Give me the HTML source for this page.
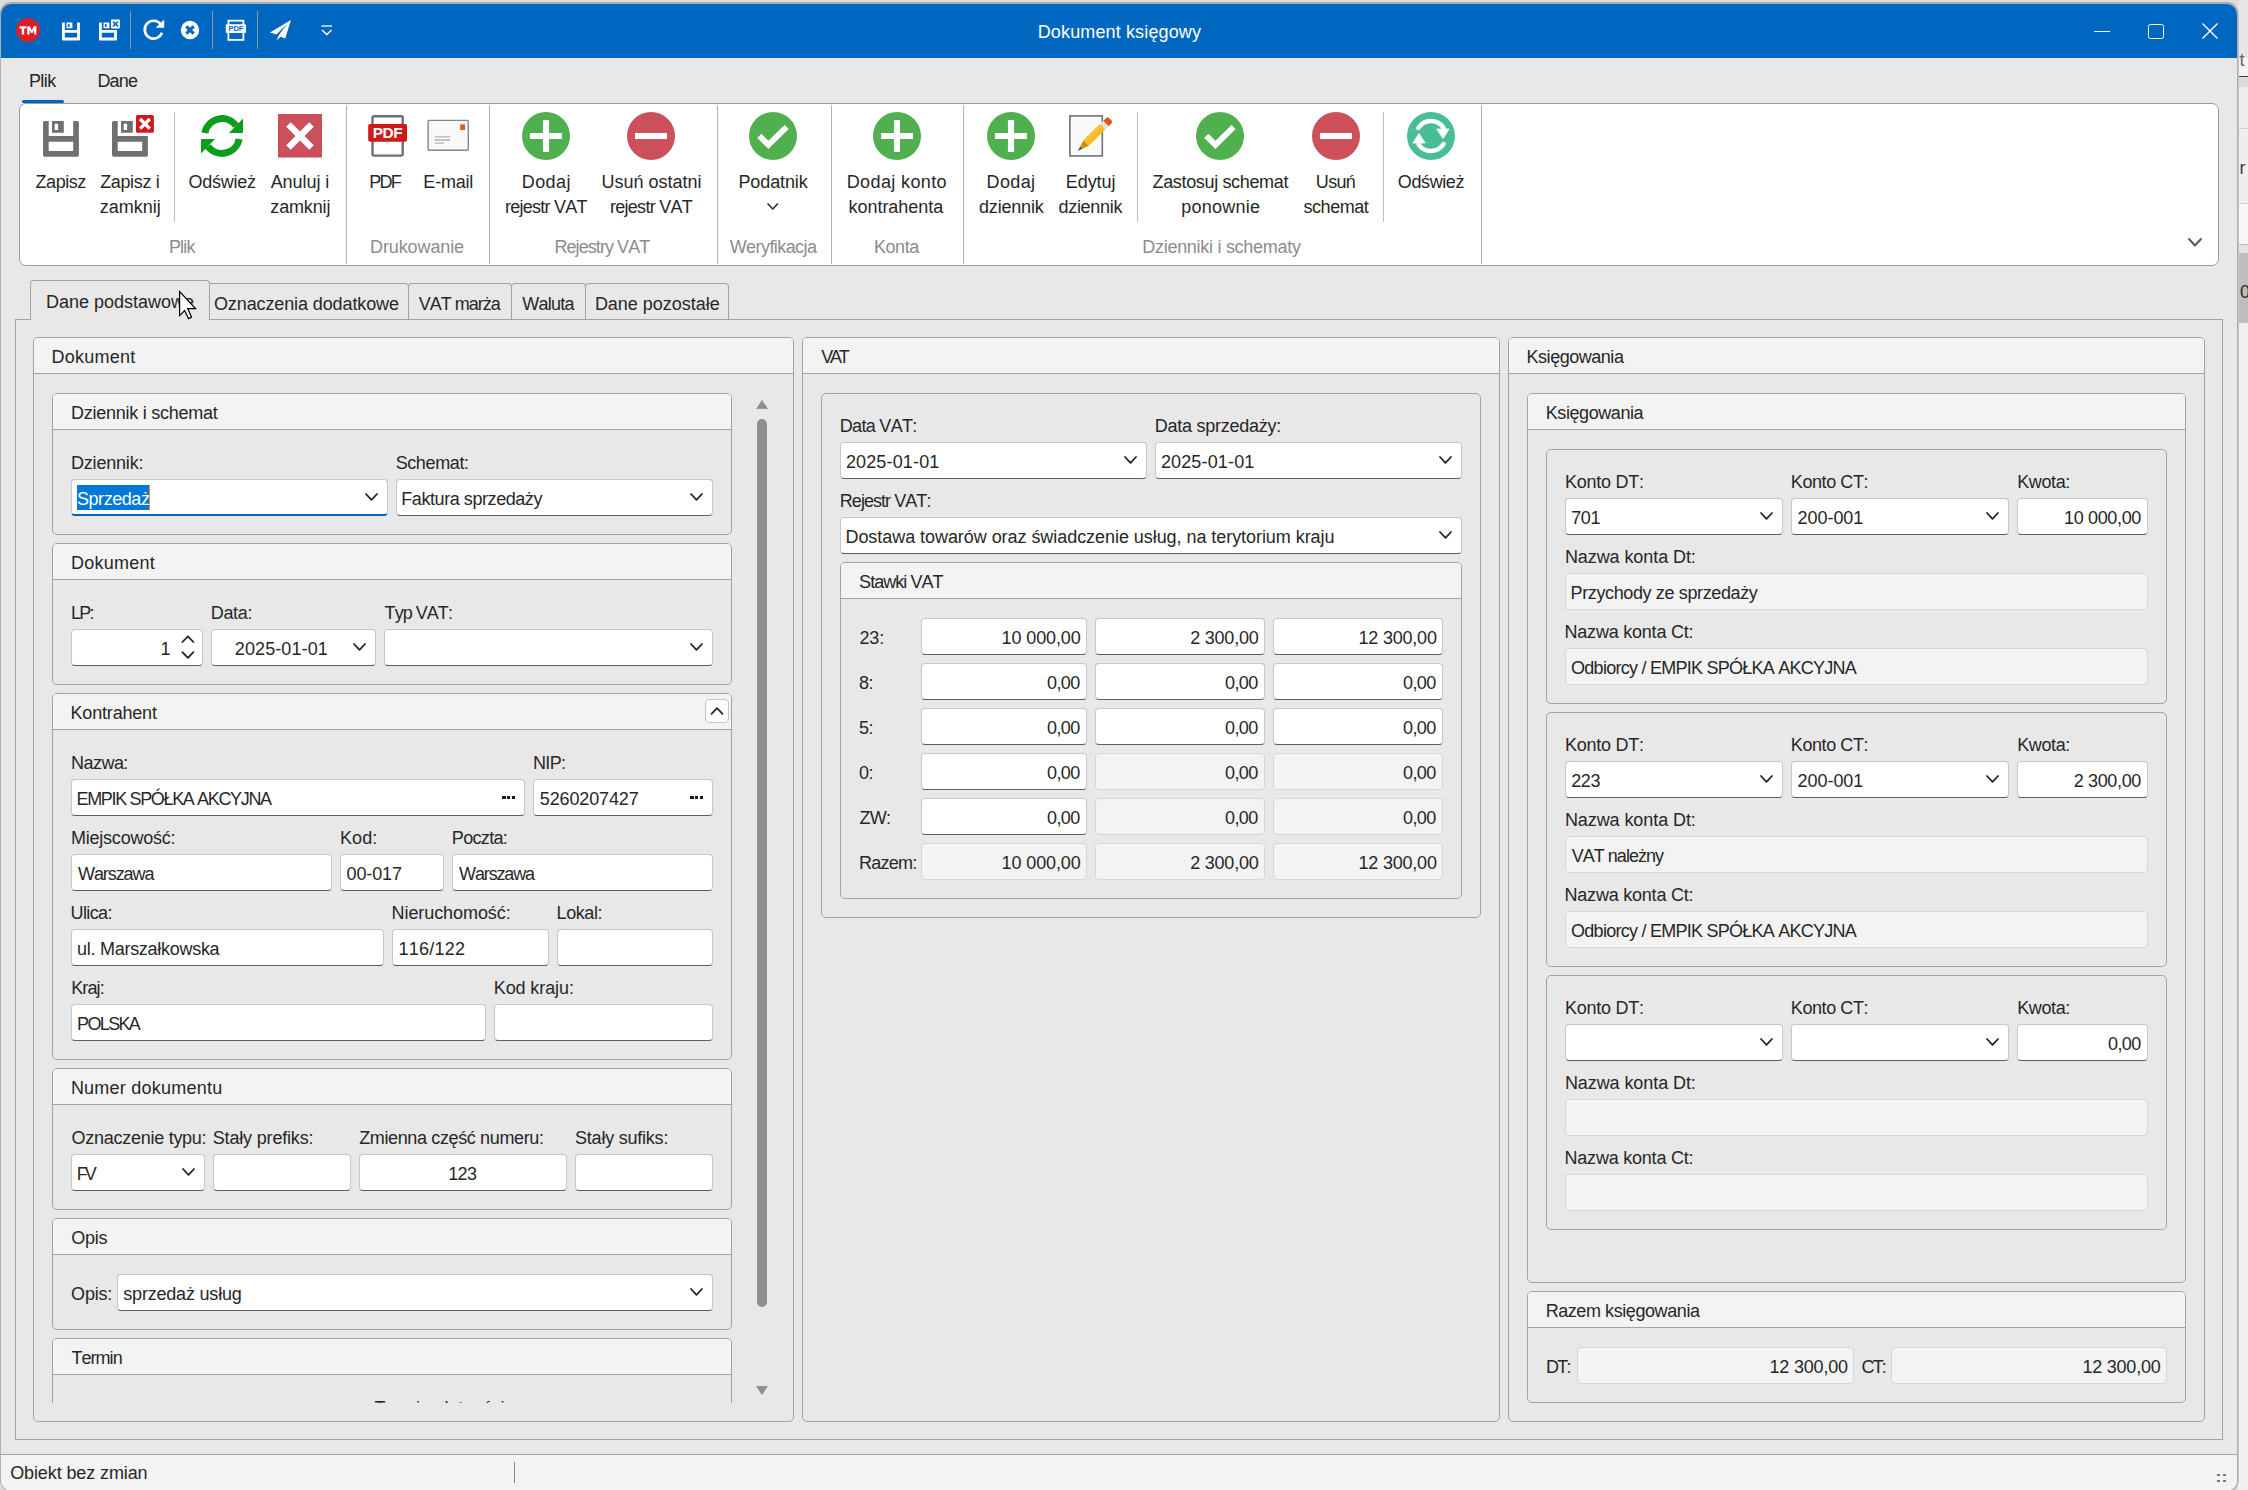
<!DOCTYPE html>
<html><head><meta charset="utf-8"><title>Dokument księgowy</title>
<style>
html,body{margin:0;padding:0;}
body{width:2248px;height:1490px;overflow:hidden;position:relative;background:#dcdcdc;font-family:"Liberation Sans",sans-serif;font-kerning:none;}
div,svg{position:absolute;box-sizing:border-box;}
.t{white-space:nowrap;line-height:20px;height:20px;}
.g{border:1px solid #a3a3a3;border-radius:5px;background:#e8e8e8;overflow:hidden;}
.gh{left:0;top:0;right:0;height:36px;background:#f3f3f3;border-bottom:1px solid #a3a3a3;}
.i{background:#fff;border:1px solid #c6c6c6;border-bottom:1px solid #5f5f5f;border-radius:4px;}
.i.ro{background:#f3f3f3;border:1px solid #d6d6d6;}
.i.fo{border-bottom:2px solid #0067c0;}
.vs{width:1px;background:#b4b4b4;}
</style></head><body>

<div class="a" style="left:2238px;top:0px;width:10px;height:1490px;background:#f0f0f0;"></div>
<div class="a" style="left:2238px;top:0px;width:10px;height:58px;background:#e6e6e6;"></div>
<div class="a" style="left:2238px;top:58px;width:10px;height:18px;background:#f4f4f4;"></div>
<div class="a" style="left:2238px;top:76px;width:10px;height:1px;background:#3c3c3c;"></div>
<div class="a" style="left:2238px;top:77px;width:10px;height:10px;background:#dcdcdc;"></div>
<div class="a" style="left:2238px;top:87px;width:10px;height:42px;background:#ececec;"></div>
<div class="a" style="left:2238px;top:128px;width:10px;height:1px;background:#cfcfcf;"></div>
<div class="a" style="left:2238px;top:129px;width:10px;height:74px;background:#eeeeee;"></div>
<div class="a" style="left:2238px;top:203px;width:10px;height:1px;background:#d2d2d2;"></div>
<div class="a" style="left:2238px;top:204px;width:10px;height:40px;background:#f6f6f6;"></div>
<div class="a" style="left:2238px;top:244px;width:10px;height:1px;background:#b8b8b8;"></div>
<div class="a" style="left:2238px;top:245px;width:10px;height:8px;background:#e2e2e2;"></div>
<div class="a" style="left:2238px;top:253px;width:10px;height:70px;background:#bebebe;"></div>
<div class="t" style="top:50px;font-size:18px;color:#5c6670;letter-spacing:0px;left:2239.5px;">t</div>
<div class="t" style="top:158px;font-size:18px;color:#3a3a3a;letter-spacing:0px;left:2239.5px;">r</div>
<div class="t" style="top:282px;font-size:18px;color:#2a2a2a;letter-spacing:0px;left:2240px;">0</div>
<div style="left:1px;top:4px;width:2236px;height:1487px;background:#e8e8e8;border-radius:10px 10px 11px 11px;box-shadow:0 0 0 1px #b0aeab,0 -1px 0 1px #ababab,1px 0 0 1px #c6c6c6;"></div>
<div style="left:1px;top:4px;width:2236px;height:54px;background:#0067c0;border-radius:10px 10px 0 0;"></div>
<div class="t" style="top:22px;font-size:18px;color:#fff;letter-spacing:0.138px;left:819.43px;width:600px;text-align:center;">Dokument księgowy</div>
<svg class="a" style="left:15px;top:17px" width="26" height="26" viewBox="0 0 26 26"><circle cx="13" cy="13" r="12" fill="#dc1f26"/><path d="M4.6 9.2h6.8v2.2H9.2v6H6.8v-6H4.6z M12.3 9.2h2.5l2 4.1 2-4.1h2.5v8.2h-2.2v-4.7l-1.6 3.3h-1.4l-1.6-3.3v4.7h-2.2z" fill="#fff"/></svg>
<svg class="a" style="left:62px;top:18.7px" width="22.0" height="22.0" viewBox="0 -3.5 22.0 22.0"><path fill="#fff" fill-rule="evenodd" d="M0.00 0.60 L0.60 0.00 L2.85 0.00 L2.85 7.45 L15.10 7.45 L15.10 0.00 L17.35 0.00 L17.95 0.60 L17.95 17.30 L17.35 17.90 L0.60 17.90 L0.00 17.30ZM2.85 10.35 L2.85 15.05 L15.10 15.05 L15.10 10.35ZM4.50 0.00 L10.40 0.00 L10.40 5.85 L4.50 5.85ZM5.85 1.40 L5.85 4.45 L7.55 4.45 L7.55 1.40Z"/></svg>
<svg class="a" style="left:99.2px;top:18.7px" width="22.0" height="22.0" viewBox="0 -3.5 22.0 22.0"><path fill="#fff" fill-rule="evenodd" d="M0.00 0.60 L0.60 0.00 L2.85 0.00 L2.85 7.45 L17.95 7.45 L17.95 17.30 L17.35 17.90 L0.60 17.90 L0.00 17.30ZM2.85 10.35 L2.85 15.05 L15.10 15.05 L15.10 10.35ZM4.50 0.00 L10.40 0.00 L10.40 5.85 L4.50 5.85ZM5.85 1.40 L5.85 4.45 L7.55 4.45 L7.55 1.40Z"/><rect x="12.00" y="-3.05" width="8.95" height="8.95" rx="0.80" fill="#fff"/><path d="M14.05 -1.00L18.90 3.85M18.90 -1.00L14.05 3.85" stroke="#0067c0" stroke-width="1.65" fill="none"/></svg>
<div class="a" style="left:130px;top:11px;width:1px;height:38px;background:#8898a8;"></div>
<svg class="a" style="left:141px;top:18px" width="26" height="24" viewBox="0 0 26 24"><path d="M19.8 6.4A8.9 8.9 0 1 0 21 14.8" fill="none" stroke="#fff" stroke-width="2.6"/><path d="M14.6 9.8h8.6V1.6z" fill="#fff"/></svg>
<svg class="a" style="left:180px;top:20px" width="20" height="20" viewBox="0 0 20 20"><circle cx="10" cy="10" r="9.2" fill="#fff"/><path d="M6.3 6.3l7.4 7.4M13.7 6.3l-7.4 7.4" stroke="#0067c0" stroke-width="3.2"/></svg>
<div class="a" style="left:212px;top:11px;width:1px;height:38px;background:#8898a8;"></div>
<svg class="a" style="left:225px;top:19px" width="22" height="22" viewBox="0 0 22 22"><rect x="3.4" y="1.7" width="15" height="19.2" fill="none" stroke="#fff" stroke-width="1.8"/><rect x="0.8" y="5.2" width="20.2" height="8.8" rx="1" fill="#fff"/><text x="10.9" y="12.4" font-family="Liberation Sans" font-weight="bold" font-size="7.6" fill="#0067c0" text-anchor="middle" letter-spacing="-0.2">PDF</text></svg>
<div class="a" style="left:257px;top:11px;width:1px;height:38px;background:#8898a8;"></div>
<svg class="a" style="left:269px;top:19px" width="24" height="22" viewBox="0 0 24 22"><path d="M22 1L1 13.6l6.4 1.8L18 5 9.6 16.4l-1.9 5 3.9-3.6 4.6 1.6z" fill="#fff"/></svg>
<svg class="a" style="left:320px;top:24px" width="14" height="13" viewBox="0 0 14 13"><path d="M1.5 2h10.6" stroke="#fff" stroke-width="1.3"/><path d="M2 6l4.8 4.6L11.6 6" fill="none" stroke="#fff" stroke-width="1.4"/></svg>
<div class="a" style="left:2094px;top:31px;width:16px;height:1.4px;background:#fff;"></div>
<div class="a" style="left:2148px;top:23.5px;width:15.5px;height:15.5px;border:1.5px solid #fff;border-radius:2.5px;"></div>
<svg class="a" style="left:2201px;top:22px" width="18" height="18" viewBox="0 0 18 18"><path d="M1.5 1.5l15 15M16.5 1.5l-15 15" stroke="#fff" stroke-width="1.4"/></svg>
<div class="t" style="top:71px;font-size:18px;color:#272727;letter-spacing:-0.579px;left:28.94px;">Plik</div>
<div class="t" style="top:71px;font-size:18px;color:#272727;letter-spacing:-0.773px;left:97.38000000000001px;">Dane</div>
<div class="a" style="left:22px;top:100px;width:42px;height:3px;background:#0067c0;border-radius:1.5px;"></div>
<div class="a" style="left:19px;top:103px;width:2200px;height:163px;background:#fff;border:1px solid #9c9c9c;border-radius:7px;"></div>
<div class="vs" style="left:346px;top:105px;width:1px;height:159px;"></div>
<div class="vs" style="left:489px;top:105px;width:1px;height:159px;"></div>
<div class="vs" style="left:717px;top:105px;width:1px;height:159px;"></div>
<div class="vs" style="left:831px;top:105px;width:1px;height:159px;"></div>
<div class="vs" style="left:963px;top:105px;width:1px;height:159px;"></div>
<div class="vs" style="left:1481px;top:105px;width:1px;height:159px;"></div>
<div class="vs" style="left:174px;top:112px;width:1px;height:110px;background:#c0c0c0;"></div>
<div class="vs" style="left:1137px;top:112px;width:1px;height:110px;background:#c0c0c0;"></div>
<div class="vs" style="left:1383px;top:112px;width:1px;height:110px;background:#c0c0c0;"></div>
<div class="t" style="top:237px;font-size:18px;color:#8c8c8c;letter-spacing:-0.819px;left:-118.23px;width:600px;text-align:center;">Plik</div>
<div class="t" style="top:237px;font-size:18px;color:#8c8c8c;letter-spacing:-0.11px;left:117.02px;width:600px;text-align:center;">Drukowanie</div>
<div class="t" style="top:237px;font-size:18px;color:#8c8c8c;letter-spacing:-0.933px;left:301.89px;width:600px;text-align:center;">Rejestry VAT</div>
<div class="t" style="top:237px;font-size:18px;color:#8c8c8c;letter-spacing:-0.572px;left:473.05px;width:600px;text-align:center;">Weryfikacja</div>
<div class="t" style="top:237px;font-size:18px;color:#8c8c8c;letter-spacing:-0.403px;left:596.40px;width:600px;text-align:center;">Konta</div>
<div class="t" style="top:237px;font-size:18px;color:#8c8c8c;letter-spacing:-0.283px;left:921.46px;width:600px;text-align:center;">Dzienniki i schematy</div>
<svg class="a" style="left:2186.50px;top:237.25px" width="16.00" height="10.50" viewBox="-2 -2 16.00 10.50"><path d="M0 0 L6.00 6.50 L12.00 0" fill="none" stroke="#555" stroke-width="1.9" stroke-linecap="round" stroke-linejoin="round"/></svg>
<div class="t" style="top:172px;font-size:18px;color:#272727;letter-spacing:-0.438px;left:-239.30px;width:600px;text-align:center;">Zapisz</div>
<div class="t" style="top:172px;font-size:18px;color:#272727;letter-spacing:-0.362px;left:-170.26px;width:600px;text-align:center;">Zapisz i</div>
<div class="t" style="top:197px;font-size:18px;color:#272727;letter-spacing:0.013px;left:-169.67px;width:600px;text-align:center;">zamknij</div>
<div class="t" style="top:172px;font-size:18px;color:#272727;letter-spacing:-0.278px;left:-77.88px;width:600px;text-align:center;">Odśwież</div>
<div class="t" style="top:172px;font-size:18px;color:#272727;letter-spacing:-0.044px;left:-0.04px;width:600px;text-align:center;">Anuluj i</div>
<div class="t" style="top:197px;font-size:18px;color:#272727;letter-spacing:-0.147px;left:0.31px;width:600px;text-align:center;">zamknij</div>
<div class="t" style="top:172px;font-size:18px;color:#272727;letter-spacing:-1.849px;left:84.60px;width:600px;text-align:center;">PDF</div>
<div class="t" style="top:172px;font-size:18px;color:#272727;letter-spacing:-0.209px;left:148.22px;width:600px;text-align:center;">E-mail</div>
<div class="t" style="top:172px;font-size:18px;color:#272727;letter-spacing:0.411px;left:246.29px;width:600px;text-align:center;">Dodaj</div>
<div class="t" style="top:197px;font-size:18px;color:#272727;letter-spacing:-0.759px;left:245.86px;width:600px;text-align:center;">rejestr VAT</div>
<div class="t" style="top:172px;font-size:18px;color:#272727;letter-spacing:-0.021px;left:351.47px;width:600px;text-align:center;">Usuń ostatni</div>
<div class="t" style="top:197px;font-size:18px;color:#272727;letter-spacing:-0.73px;left:351.03px;width:600px;text-align:center;">rejestr VAT</div>
<div class="t" style="top:172px;font-size:18px;color:#272727;letter-spacing:-0.123px;left:473.02px;width:600px;text-align:center;">Podatnik</div>
<svg class="a" style="left:766.25px;top:202.00px" width="13.50" height="9.00" viewBox="-2 -2 13.50 9.00"><path d="M0 0 L4.75 5.00 L9.50 0" fill="none" stroke="#333" stroke-width="1.7" stroke-linecap="round" stroke-linejoin="round"/></svg>
<div class="t" style="top:172px;font-size:18px;color:#272727;letter-spacing:0.381px;left:596.87px;width:600px;text-align:center;">Dodaj konto</div>
<div class="t" style="top:197px;font-size:18px;color:#272727;letter-spacing:-0.032px;left:595.86px;width:600px;text-align:center;">kontrahenta</div>
<div class="t" style="top:172px;font-size:18px;color:#272727;letter-spacing:0.379px;left:711.03px;width:600px;text-align:center;">Dodaj</div>
<div class="t" style="top:197px;font-size:18px;color:#272727;letter-spacing:-0.18px;left:711.31px;width:600px;text-align:center;">dziennik</div>
<div class="t" style="top:172px;font-size:18px;color:#272727;letter-spacing:-0.053px;left:790.63px;width:600px;text-align:center;">Edytuj</div>
<div class="t" style="top:197px;font-size:18px;color:#272727;letter-spacing:-0.28px;left:790.36px;width:600px;text-align:center;">dziennik</div>
<div class="t" style="top:172px;font-size:18px;color:#272727;letter-spacing:-0.34px;left:920.31px;width:600px;text-align:center;">Zastosuj schemat</div>
<div class="t" style="top:197px;font-size:18px;color:#272727;letter-spacing:0.253px;left:920.77px;width:600px;text-align:center;">ponownie</div>
<div class="t" style="top:172px;font-size:18px;color:#272727;letter-spacing:-0.661px;left:1035.51px;width:600px;text-align:center;">Usuń</div>
<div class="t" style="top:197px;font-size:18px;color:#272727;letter-spacing:-0.448px;left:1035.94px;width:600px;text-align:center;">schemat</div>
<div class="t" style="top:172px;font-size:18px;color:#272727;letter-spacing:-0.392px;left:1130.96px;width:600px;text-align:center;">Odśwież</div>
<svg class="a" style="left:522px;top:112px" width="48" height="48" viewBox="0 0 48 48"><circle cx="24" cy="24" r="24" fill="#50b050"/><path d="M24 8v32M8 24h32" stroke="#fff" stroke-width="6.1"/></svg>
<svg class="a" style="left:627px;top:112px" width="48" height="48" viewBox="0 0 48 48"><circle cx="24" cy="24" r="24" fill="#cc4f5c"/><path d="M8 24h32" stroke="#fff" stroke-width="6.1"/></svg>
<svg class="a" style="left:749px;top:112px" width="48" height="48" viewBox="0 0 48 48"><circle cx="24" cy="24" r="24" fill="#50b050"/><path d="M10.3 23.9l9.1 9 18.2-17.9" fill="none" stroke="#fff" stroke-width="5.9"/></svg>
<svg class="a" style="left:873px;top:112px" width="48" height="48" viewBox="0 0 48 48"><circle cx="24" cy="24" r="24" fill="#50b050"/><path d="M24 8v32M8 24h32" stroke="#fff" stroke-width="6.1"/></svg>
<svg class="a" style="left:987px;top:112px" width="48" height="48" viewBox="0 0 48 48"><circle cx="24" cy="24" r="24" fill="#50b050"/><path d="M24 8v32M8 24h32" stroke="#fff" stroke-width="6.1"/></svg>
<svg class="a" style="left:1196px;top:112px" width="48" height="48" viewBox="0 0 48 48"><circle cx="24" cy="24" r="24" fill="#50b050"/><path d="M10.3 23.9l9.1 9 18.2-17.9" fill="none" stroke="#fff" stroke-width="5.9"/></svg>
<svg class="a" style="left:1312px;top:112px" width="48" height="48" viewBox="0 0 48 48"><circle cx="24" cy="24" r="24" fill="#cc4f5c"/><path d="M8 24h32" stroke="#fff" stroke-width="6.1"/></svg>
<svg class="a" style="left:1407px;top:112px" width="48" height="48" viewBox="0 0 48 48"><circle cx="24" cy="24" r="24" fill="#4abd98"/><path d="M11.3 16.05A15 15 0 0 1 36.4 15.6" fill="none" stroke="#fff" stroke-width="4.4" stroke-linecap="round"/><path d="M29.8 17.1L42.1 16.9 36.1 26.5z" fill="#fff" stroke="#fff" stroke-width="0.8" stroke-linejoin="round"/><path d="M36.7 31.95A15 15 0 0 1 11.6 32.4" fill="none" stroke="#fff" stroke-width="4.4" stroke-linecap="round"/><path d="M18.2 30.9L5.9 31.1 11.9 21.5z" fill="#fff" stroke="#fff" stroke-width="0.8" stroke-linejoin="round"/></svg>
<svg class="a" style="left:43px;top:114.0px" width="44.0" height="44.0" viewBox="0 -7.0 44.0 44.0"><path fill="#707070" fill-rule="evenodd" d="M0.00 1.20 L1.20 0.00 L5.70 0.00 L5.70 14.90 L30.20 14.90 L30.20 0.00 L34.70 0.00 L35.90 1.20 L35.90 34.60 L34.70 35.80 L1.20 35.80 L0.00 34.60ZM5.70 20.70 L5.70 30.10 L30.20 30.10 L30.20 20.70ZM9.00 0.00 L20.80 0.00 L20.80 11.70 L9.00 11.70ZM11.70 2.80 L11.70 8.90 L15.10 8.90 L15.10 2.80Z"/></svg>
<svg class="a" style="left:112px;top:114.0px" width="44.0" height="44.0" viewBox="0 -7.0 44.0 44.0"><path fill="#707070" fill-rule="evenodd" d="M0.00 1.20 L1.20 0.00 L5.70 0.00 L5.70 14.90 L35.90 14.90 L35.90 34.60 L34.70 35.80 L1.20 35.80 L0.00 34.60ZM5.70 20.70 L5.70 30.10 L30.20 30.10 L30.20 20.70ZM9.00 0.00 L20.80 0.00 L20.80 11.70 L9.00 11.70ZM11.70 2.80 L11.70 8.90 L15.10 8.90 L15.10 2.80Z"/><rect x="24.00" y="-6.10" width="17.90" height="17.90" rx="1.60" fill="#d01a1a"/><path d="M28.10 -2.00L37.80 7.70M37.80 -2.00L28.10 7.70" stroke="#fff" stroke-width="3.30" fill="none"/></svg>
<svg class="a" style="left:198px;top:112px" width="48" height="48" viewBox="0 0 48 48"><path d="M6.9 21A17.4 17.4 0 0 1 38.1 13.8" fill="none" stroke="#0a9d1e" stroke-width="7"/><path d="M45 6.4V21H31z" fill="#0a9d1e"/><path d="M41.1 27A17.4 17.4 0 0 1 9.9 34.2" fill="none" stroke="#0a9d1e" stroke-width="7"/><path d="M3 41.6V27H17z" fill="#0a9d1e"/></svg>
<svg class="a" style="left:277.5px;top:114px" width="44" height="44" viewBox="0 0 44 44"><rect width="44" height="43.5" fill="#cc4f5c"/><path d="M10.5 10.5l23 23M33.5 10.5l-23 23" stroke="#fff" stroke-width="6.4"/></svg>
<svg class="a" style="left:366px;top:113px" width="42" height="46" viewBox="0 0 42 46"><rect x="6.5" y="3.2" width="30.2" height="39.4" rx="1.6" fill="#fff" stroke="#707070" stroke-width="2.4"/><rect x="2.2" y="11" width="38.8" height="17.7" rx="1.8" fill="#d01a1a"/><text x="21.5" y="25.4" font-family="Liberation Sans" font-weight="bold" font-size="15.4" fill="#fff" text-anchor="middle" letter-spacing="-0.5">PDF</text></svg>
<svg class="a" style="left:425px;top:118px" width="46" height="34" viewBox="0 0 46 34"><rect x="3.1" y="2.4" width="40.2" height="29.8" rx="1" fill="#f9f9f9" stroke="#7f868c" stroke-width="1.4"/><rect x="35.2" y="6.4" width="4.8" height="5.6" fill="#e8561c"/><path d="M9.6 18.8h15.4M9.6 22h15.4M9.6 25.1h9.2" stroke="#b0b4b8" stroke-width="1.3"/></svg>
<svg class="a" style="left:1067px;top:111px" width="50" height="48" viewBox="0 0 50 48"><rect x="2.9" y="4.9" width="32.4" height="40" fill="#fafafa" stroke="#6c737b" stroke-width="1.6"/><path d="M11.00 39.90 L13.21 35.59 L15.36 37.77Z" fill="#3c4450"/><path d="M13.21 35.59 L16.48 29.21 L21.80 34.63 L15.36 37.77Z" fill="#cc8d05"/><path d="M16.48 29.21 L33.12 12.90 L38.44 18.32 L21.80 34.63Z" fill="#f9ba1e"/><path d="M16.48 29.21 L33.12 12.90 L35.36 15.18 L18.72 31.49Z" fill="#fbc435"/><path d="M33.12 12.90 L36.33 9.75 L41.65 15.17 L38.44 18.32Z" fill="#dfe3e6"/><path d="M36.33 9.75 L39.76 6.39 L41.45 6.40 L45.09 10.12 L45.08 11.81 L41.65 15.17Z" fill="#e4551b"/></svg>
<div class="a" style="left:15px;top:319px;width:2208px;height:1121px;border:1px solid #a3a3a3;background:#e8e8e8;"></div>
<div class="a" style="left:205px;top:283px;width:204px;height:36px;border:1px solid #a3a3a3;border-bottom:none;border-radius:4px 4px 0 0;background:#e8e8e8;"></div>
<div class="t" style="top:294px;font-size:18px;color:#272727;letter-spacing:-0.11px;left:213.96px;">Oznaczenia dodatkowe</div>
<div class="a" style="left:408px;top:283px;width:104px;height:36px;border:1px solid #a3a3a3;border-bottom:none;border-radius:4px 4px 0 0;background:#e8e8e8;"></div>
<div class="t" style="top:294px;font-size:18px;color:#272727;letter-spacing:-0.998px;left:418.68px;">VAT marża</div>
<div class="a" style="left:511px;top:283px;width:75px;height:36px;border:1px solid #a3a3a3;border-bottom:none;border-radius:4px 4px 0 0;background:#e8e8e8;"></div>
<div class="t" style="top:294px;font-size:18px;color:#272727;letter-spacing:-0.743px;left:522.16px;">Waluta</div>
<div class="a" style="left:585px;top:283px;width:144px;height:36px;border:1px solid #a3a3a3;border-bottom:none;border-radius:4px 4px 0 0;background:#e8e8e8;"></div>
<div class="t" style="top:294px;font-size:18px;color:#272727;letter-spacing:-0.021px;left:594.88px;">Dane pozostałe</div>
<div class="a" style="left:30px;top:280px;width:180px;height:40px;border:1px solid #a3a3a3;border-bottom:none;border-radius:4px 4px 0 0;background:#e8e8e8;"></div>
<div class="t" style="top:292px;font-size:18px;color:#272727;letter-spacing:-0.005px;left:46px;">Dane podstawowe</div>
<div class="g" style="left:33px;top:337px;width:761px;height:1085px;">
<div class="gh"></div>
</div>
<div class="t" style="top:347px;font-size:18px;color:#272727;letter-spacing:0.24px;left:51.56px;">Dokument</div>
<div style="left:34px;top:374px;width:759px;height:1029px;overflow:hidden;background:#e8e8e8;">
<div style="left:-34px;top:-374px;width:800px;height:1500px;">
<div class="g" style="left:52px;top:393px;width:680px;height:142px;">
<div class="gh"></div>
</div>
<div class="t" style="top:403px;font-size:18px;color:#272727;letter-spacing:-0.261px;left:71.12px;">Dziennik i schemat</div>
<div class="t" style="top:453px;font-size:18px;color:#272727;letter-spacing:-0.204px;left:71.04px;">Dziennik:</div>
<div class="t" style="top:453px;font-size:18px;color:#272727;letter-spacing:-0.38px;left:395.64px;">Schemat:</div>
<div class="i fo" style="left:71px;top:479px;width:317px;height:37px;"></div>
<svg class="a" style="left:364.30px;top:492.40px" width="15.00" height="9.80" viewBox="-2 -2 15.00 9.80"><path d="M0 0 L5.50 5.80 L11.00 0" fill="none" stroke="#262626" stroke-width="1.8" stroke-linecap="round" stroke-linejoin="round"/></svg>
<div class="a" style="left:77px;top:485px;width:72px;height:25px;background:#0078d7;"></div>
<div class="a" style="left:149px;top:485px;width:1px;height:25px;background:#ff8a1f;"></div>
<div class="t" style="top:489px;font-size:18px;color:#fff;letter-spacing:-0.452px;left:77px;">Sprzedaż</div>
<div class="i" style="left:396px;top:479px;width:317px;height:37px;"></div>
<div class="t" style="top:489px;font-size:18px;color:#272727;letter-spacing:-0.434px;left:401.32px;">Faktura sprzedaży</div>
<svg class="a" style="left:689.30px;top:492.40px" width="15.00" height="9.80" viewBox="-2 -2 15.00 9.80"><path d="M0 0 L5.50 5.80 L11.00 0" fill="none" stroke="#262626" stroke-width="1.8" stroke-linecap="round" stroke-linejoin="round"/></svg>
<div class="g" style="left:52px;top:543px;width:680px;height:142px;">
<div class="gh"></div>
</div>
<div class="t" style="top:553px;font-size:18px;color:#272727;letter-spacing:0.22px;left:71.12px;">Dokument</div>
<div class="t" style="top:603px;font-size:18px;color:#272727;letter-spacing:-1.762px;left:70.96px;">LP:</div>
<div class="t" style="top:603px;font-size:18px;color:#272727;letter-spacing:-0.319px;left:210.72px;">Data:</div>
<div class="t" style="top:603px;font-size:18px;color:#272727;letter-spacing:-0.959px;left:384.6px;">Typ VAT:</div>
<div class="i" style="left:71px;top:629px;width:132px;height:37px;"></div>
<div class="t" style="top:639px;font-size:18px;color:#272727;letter-spacing:-0.23px;left:-429.73px;width:600px;text-align:right;">1</div>
<svg class="a" style="left:180px;top:633px" width="16" height="28" viewBox="0 0 16 28"><path d="M2.4 9L7.9 3.3l5.5 5.7M2.4 19.2L7.9 24.9l5.5-5.7" fill="none" stroke="#262626" stroke-width="1.8" stroke-linecap="round" stroke-linejoin="round"/></svg>
<div class="i" style="left:211px;top:629px;width:165px;height:37px;"></div>
<div class="t" style="top:639px;font-size:18px;color:#272727;letter-spacing:0.102px;left:234.8px;">2025-01-01</div>
<svg class="a" style="left:352.30px;top:642.40px" width="15.00" height="9.80" viewBox="-2 -2 15.00 9.80"><path d="M0 0 L5.50 5.80 L11.00 0" fill="none" stroke="#262626" stroke-width="1.8" stroke-linecap="round" stroke-linejoin="round"/></svg>
<div class="i" style="left:384px;top:629px;width:329px;height:37px;"></div>
<svg class="a" style="left:689.30px;top:642.40px" width="15.00" height="9.80" viewBox="-2 -2 15.00 9.80"><path d="M0 0 L5.50 5.80 L11.00 0" fill="none" stroke="#262626" stroke-width="1.8" stroke-linecap="round" stroke-linejoin="round"/></svg>
<div class="g" style="left:52px;top:693px;width:680px;height:367px;">
<div class="gh"></div>
</div>
<div class="t" style="top:703px;font-size:18px;color:#272727;letter-spacing:-0.187px;left:70.56px;">Kontrahent</div>
<div class="a" style="left:705px;top:699px;width:24px;height:24px;background:#fdfdfd;border:1px solid #c6c6c6;border-radius:4px;"></div>
<svg class="a" style="left:710px;top:706px" width="14" height="10" viewBox="0 0 14 10"><path d="M1.5 7.8L7 2.2 12.5 7.8" fill="none" stroke="#262626" stroke-width="1.8" stroke-linecap="round" stroke-linejoin="round"/></svg>
<div class="t" style="top:753px;font-size:18px;color:#272727;letter-spacing:-0.539px;left:71.04px;">Nazwa:</div>
<div class="t" style="top:753px;font-size:18px;color:#272727;letter-spacing:-0.628px;left:532.96px;">NIP:</div>
<div class="i" style="left:71px;top:779px;width:454px;height:37px;"></div>
<div class="t" style="top:789px;font-size:18px;color:#272727;letter-spacing:-1.344px;left:76.56px;">EMPIK SPÓŁKA AKCYJNA</div>
<div class="a" style="left:502.4px;top:795.8px;width:3.2px;height:3.2px;background:#1a1a1a;"></div>
<div class="a" style="left:507.0px;top:795.8px;width:3.2px;height:3.2px;background:#1a1a1a;"></div>
<div class="a" style="left:511.59999999999997px;top:795.8px;width:3.2px;height:3.2px;background:#1a1a1a;"></div>
<div class="i" style="left:533px;top:779px;width:180px;height:37px;"></div>
<div class="t" style="top:789px;font-size:18px;color:#272727;letter-spacing:-0.134px;left:539.76px;">5260207427</div>
<div class="a" style="left:690.4px;top:795.8px;width:3.2px;height:3.2px;background:#1a1a1a;"></div>
<div class="a" style="left:695.0px;top:795.8px;width:3.2px;height:3.2px;background:#1a1a1a;"></div>
<div class="a" style="left:699.6px;top:795.8px;width:3.2px;height:3.2px;background:#1a1a1a;"></div>
<div class="t" style="top:828px;font-size:18px;color:#272727;letter-spacing:-0.22px;left:70.96px;">Miejscowość:</div>
<div class="t" style="top:828px;font-size:18px;color:#272727;letter-spacing:0.042px;left:340.04px;">Kod:</div>
<div class="t" style="top:828px;font-size:18px;color:#272727;letter-spacing:-0.659px;left:451.8px;">Poczta:</div>
<div class="i" style="left:71px;top:854px;width:261px;height:37px;"></div>
<div class="t" style="top:864px;font-size:18px;color:#272727;letter-spacing:-1.088px;left:78.0px;">Warszawa</div>
<div class="i" style="left:340px;top:854px;width:104px;height:37px;"></div>
<div class="t" style="top:864px;font-size:18px;color:#272727;letter-spacing:-0.113px;left:346.52px;">00-017</div>
<div class="i" style="left:452px;top:854px;width:261px;height:37px;"></div>
<div class="t" style="top:864px;font-size:18px;color:#272727;letter-spacing:-1.148px;left:459.08px;">Warszawa</div>
<div class="t" style="top:903px;font-size:18px;color:#272727;letter-spacing:-0.61px;left:70.56px;">Ulica:</div>
<div class="t" style="top:903px;font-size:18px;color:#272727;letter-spacing:-0.076px;left:391.56px;">Nieruchomość:</div>
<div class="t" style="top:903px;font-size:18px;color:#272727;letter-spacing:-0.407px;left:556.56px;">Lokal:</div>
<div class="i" style="left:71px;top:929px;width:313px;height:37px;"></div>
<div class="t" style="top:939px;font-size:18px;color:#272727;letter-spacing:-0.284px;left:77.12px;">ul. Marszałkowska</div>
<div class="i" style="left:392px;top:929px;width:157px;height:37px;"></div>
<div class="t" style="top:939px;font-size:18px;color:#272727;letter-spacing:0.257px;left:398.52px;">116/122</div>
<div class="i" style="left:557px;top:929px;width:156px;height:37px;"></div>
<div class="t" style="top:978px;font-size:18px;color:#272727;letter-spacing:-0.876px;left:71.2px;">Kraj:</div>
<div class="t" style="top:978px;font-size:18px;color:#272727;letter-spacing:-0.095px;left:493.72px;">Kod kraju:</div>
<div class="i" style="left:71px;top:1004px;width:415px;height:37px;"></div>
<div class="t" style="top:1014px;font-size:18px;color:#272727;letter-spacing:-1.655px;left:77.12px;">POLSKA</div>
<div class="i" style="left:494px;top:1004px;width:219px;height:37px;"></div>
<div class="g" style="left:52px;top:1068px;width:680px;height:142px;">
<div class="gh"></div>
</div>
<div class="t" style="top:1078px;font-size:18px;color:#272727;letter-spacing:0.243px;left:70.88px;">Numer dokumentu</div>
<div class="t" style="top:1128px;font-size:18px;color:#272727;letter-spacing:-0.272px;left:71.6px;">Oznaczenie typu:</div>
<div class="t" style="top:1128px;font-size:18px;color:#272727;letter-spacing:-0.178px;left:212.8px;">Stały prefiks:</div>
<div class="t" style="top:1128px;font-size:18px;color:#272727;letter-spacing:-0.365px;left:359.2px;">Zmienna część numeru:</div>
<div class="t" style="top:1128px;font-size:18px;color:#272727;letter-spacing:-0.223px;left:575.04px;">Stały sufiks:</div>
<div class="i" style="left:71px;top:1154px;width:134px;height:37px;"></div>
<div class="t" style="top:1164px;font-size:18px;color:#272727;letter-spacing:-2.893px;left:76.64px;">FV</div>
<svg class="a" style="left:181.30px;top:1167.40px" width="15.00" height="9.80" viewBox="-2 -2 15.00 9.80"><path d="M0 0 L5.50 5.80 L11.00 0" fill="none" stroke="#262626" stroke-width="1.8" stroke-linecap="round" stroke-linejoin="round"/></svg>
<div class="i" style="left:213px;top:1154px;width:138px;height:37px;"></div>
<div class="i" style="left:359px;top:1154px;width:208px;height:37px;"></div>
<div class="t" style="top:1164px;font-size:18px;color:#272727;letter-spacing:-0.71px;left:162.25px;width:600px;text-align:center;">123</div>
<div class="i" style="left:575px;top:1154px;width:138px;height:37px;"></div>
<div class="g" style="left:52px;top:1218px;width:680px;height:112px;">
<div class="gh"></div>
</div>
<div class="t" style="top:1228px;font-size:18px;color:#272727;letter-spacing:-0.263px;left:71.36px;">Opis</div>
<div class="t" style="top:1284px;font-size:18px;color:#272727;letter-spacing:-0.2px;left:71.12px;">Opis:</div>
<div class="i" style="left:117px;top:1274px;width:596px;height:37px;"></div>
<div class="t" style="top:1284px;font-size:18px;color:#272727;letter-spacing:-0.198px;left:123.28px;">sprzedaż usług</div>
<svg class="a" style="left:689.30px;top:1287.40px" width="15.00" height="9.80" viewBox="-2 -2 15.00 9.80"><path d="M0 0 L5.50 5.80 L11.00 0" fill="none" stroke="#262626" stroke-width="1.8" stroke-linecap="round" stroke-linejoin="round"/></svg>
<div class="g" style="left:52px;top:1338px;width:680px;height:83px;border-bottom:none;border-bottom-left-radius:0;border-bottom-right-radius:0;">
<div class="gh"></div>
</div>
<div class="t" style="top:1348px;font-size:18px;color:#272727;letter-spacing:-0.957px;left:71.44px;">Termin</div>
<div class="t" style="top:1398px;font-size:18px;color:#272727;letter-spacing:-0.138px;left:374.5px;">Termin płatności:</div>
</div></div>
<svg class="a" style="left:754.5px;top:399px" width="14" height="11" viewBox="0 0 14 11"><path d="M7 1.4L12.3 9.6H1.7z" fill="#8e8e8e" stroke="#8e8e8e" stroke-width="0.8" stroke-linejoin="round"/></svg>
<div class="a" style="left:757px;top:419px;width:10px;height:888px;background:#8e8e8e;border-radius:5px;"></div>
<svg class="a" style="left:754.5px;top:1384.5px" width="14" height="11" viewBox="0 0 14 11"><path d="M7 9.6L12.3 1.4H1.7z" fill="#8e8e8e" stroke="#8e8e8e" stroke-width="0.8" stroke-linejoin="round"/></svg>
<div class="g" style="left:802px;top:337px;width:698px;height:1085px;">
<div class="gh"></div>
</div>
<div class="t" style="top:347px;font-size:18px;color:#272727;letter-spacing:-3.361px;left:821.36px;">VAT</div>
<div class="g" style="left:821px;top:393px;width:660px;height:525px;"></div>
<div class="t" style="top:416px;font-size:18px;color:#272727;letter-spacing:-0.696px;left:839.8px;">Data VAT:</div>
<div class="t" style="top:416px;font-size:18px;color:#272727;letter-spacing:-0.241px;left:1154.64px;">Data sprzedaży:</div>
<div class="i" style="left:840px;top:442px;width:307px;height:37px;"></div>
<div class="t" style="top:452px;font-size:18px;color:#272727;letter-spacing:0.15px;left:845.88px;">2025-01-01</div>
<svg class="a" style="left:1123.30px;top:455.40px" width="15.00" height="9.80" viewBox="-2 -2 15.00 9.80"><path d="M0 0 L5.50 5.80 L11.00 0" fill="none" stroke="#262626" stroke-width="1.8" stroke-linecap="round" stroke-linejoin="round"/></svg>
<div class="i" style="left:1155px;top:442px;width:307px;height:37px;"></div>
<div class="t" style="top:452px;font-size:18px;color:#272727;letter-spacing:0.15px;left:1160.88px;">2025-01-01</div>
<svg class="a" style="left:1438.30px;top:455.40px" width="15.00" height="9.80" viewBox="-2 -2 15.00 9.80"><path d="M0 0 L5.50 5.80 L11.00 0" fill="none" stroke="#262626" stroke-width="1.8" stroke-linecap="round" stroke-linejoin="round"/></svg>
<div class="t" style="top:491px;font-size:18px;color:#272727;letter-spacing:-0.949px;left:839.8px;">Rejestr VAT:</div>
<div class="i" style="left:840px;top:517px;width:622px;height:37px;"></div>
<div class="t" style="top:527px;font-size:18px;color:#272727;letter-spacing:-0.055px;left:845.48px;">Dostawa towarów oraz świadczenie usług, na terytorium kraju</div>
<svg class="a" style="left:1438.30px;top:530.40px" width="15.00" height="9.80" viewBox="-2 -2 15.00 9.80"><path d="M0 0 L5.50 5.80 L11.00 0" fill="none" stroke="#262626" stroke-width="1.8" stroke-linecap="round" stroke-linejoin="round"/></svg>
<div class="g" style="left:840px;top:562px;width:622px;height:337px;">
<div class="gh"></div>
</div>
<div class="t" style="top:572px;font-size:18px;color:#272727;letter-spacing:-0.954px;left:859.12px;">Stawki VAT</div>
<div class="t" style="top:628px;font-size:18px;color:#272727;letter-spacing:-0.082px;left:859.44px;">23:</div>
<div class="i" style="left:921px;top:618px;width:166px;height:37px;"></div>
<div class="t" style="top:628px;font-size:18px;color:#272727;letter-spacing:-0.123px;left:480.58px;width:600px;text-align:right;">10 000,00</div>
<div class="i" style="left:1095px;top:618px;width:170px;height:37px;"></div>
<div class="t" style="top:628px;font-size:18px;color:#272727;letter-spacing:-0.23px;left:658.47px;width:600px;text-align:right;">2 300,00</div>
<div class="i" style="left:1273px;top:618px;width:170px;height:37px;"></div>
<div class="t" style="top:628px;font-size:18px;color:#272727;letter-spacing:-0.212px;left:836.73px;width:600px;text-align:right;">12 300,00</div>
<div class="t" style="top:673px;font-size:18px;color:#272727;letter-spacing:-0.489px;left:858.96px;">8:</div>
<div class="i" style="left:921px;top:663px;width:166px;height:37px;"></div>
<div class="t" style="top:673px;font-size:18px;color:#272727;letter-spacing:-0.599px;left:479.62px;width:600px;text-align:right;">0,00</div>
<div class="i" style="left:1095px;top:663px;width:170px;height:37px;"></div>
<div class="t" style="top:673px;font-size:18px;color:#272727;letter-spacing:-0.599px;left:657.62px;width:600px;text-align:right;">0,00</div>
<div class="i" style="left:1273px;top:663px;width:170px;height:37px;"></div>
<div class="t" style="top:673px;font-size:18px;color:#272727;letter-spacing:-0.599px;left:835.62px;width:600px;text-align:right;">0,00</div>
<div class="t" style="top:718px;font-size:18px;color:#272727;letter-spacing:-0.489px;left:858.96px;">5:</div>
<div class="i" style="left:921px;top:708px;width:166px;height:37px;"></div>
<div class="t" style="top:718px;font-size:18px;color:#272727;letter-spacing:-0.599px;left:479.62px;width:600px;text-align:right;">0,00</div>
<div class="i" style="left:1095px;top:708px;width:170px;height:37px;"></div>
<div class="t" style="top:718px;font-size:18px;color:#272727;letter-spacing:-0.599px;left:657.62px;width:600px;text-align:right;">0,00</div>
<div class="i" style="left:1273px;top:708px;width:170px;height:37px;"></div>
<div class="t" style="top:718px;font-size:18px;color:#272727;letter-spacing:-0.599px;left:835.62px;width:600px;text-align:right;">0,00</div>
<div class="t" style="top:763px;font-size:18px;color:#272727;letter-spacing:-0.489px;left:858.96px;">0:</div>
<div class="i" style="left:921px;top:753px;width:166px;height:37px;"></div>
<div class="t" style="top:763px;font-size:18px;color:#272727;letter-spacing:-0.599px;left:479.62px;width:600px;text-align:right;">0,00</div>
<div class="i ro" style="left:1095px;top:753px;width:170px;height:37px;"></div>
<div class="t" style="top:763px;font-size:18px;color:#272727;letter-spacing:-0.599px;left:657.62px;width:600px;text-align:right;">0,00</div>
<div class="i ro" style="left:1273px;top:753px;width:170px;height:37px;"></div>
<div class="t" style="top:763px;font-size:18px;color:#272727;letter-spacing:-0.599px;left:835.62px;width:600px;text-align:right;">0,00</div>
<div class="t" style="top:808px;font-size:18px;color:#272727;letter-spacing:-0.692px;left:859.44px;">ZW:</div>
<div class="i" style="left:921px;top:798px;width:166px;height:37px;"></div>
<div class="t" style="top:808px;font-size:18px;color:#272727;letter-spacing:-0.599px;left:479.62px;width:600px;text-align:right;">0,00</div>
<div class="i ro" style="left:1095px;top:798px;width:170px;height:37px;"></div>
<div class="t" style="top:808px;font-size:18px;color:#272727;letter-spacing:-0.599px;left:657.62px;width:600px;text-align:right;">0,00</div>
<div class="i ro" style="left:1273px;top:798px;width:170px;height:37px;"></div>
<div class="t" style="top:808px;font-size:18px;color:#272727;letter-spacing:-0.599px;left:835.62px;width:600px;text-align:right;">0,00</div>
<div class="t" style="top:853px;font-size:18px;color:#272727;letter-spacing:-0.725px;left:858.96px;">Razem:</div>
<div class="i ro" style="left:921px;top:843px;width:166px;height:37px;"></div>
<div class="t" style="top:853px;font-size:18px;color:#272727;letter-spacing:-0.123px;left:480.58px;width:600px;text-align:right;">10 000,00</div>
<div class="i ro" style="left:1095px;top:843px;width:170px;height:37px;"></div>
<div class="t" style="top:853px;font-size:18px;color:#272727;letter-spacing:-0.23px;left:658.47px;width:600px;text-align:right;">2 300,00</div>
<div class="i ro" style="left:1273px;top:843px;width:170px;height:37px;"></div>
<div class="t" style="top:853px;font-size:18px;color:#272727;letter-spacing:-0.212px;left:836.73px;width:600px;text-align:right;">12 300,00</div>
<div class="g" style="left:1508px;top:337px;width:697px;height:1085px;">
<div class="gh"></div>
</div>
<div class="t" style="top:347px;font-size:18px;color:#272727;letter-spacing:-0.471px;left:1526.56px;">Księgowania</div>
<div class="g" style="left:1527px;top:393px;width:659px;height:890px;">
<div class="gh"></div>
</div>
<div class="t" style="top:403px;font-size:18px;color:#272727;letter-spacing:-0.428px;left:1545.8px;">Księgowania</div>
<div class="g" style="left:1546px;top:449px;width:621px;height:255px;"></div>
<div class="t" style="top:472px;font-size:18px;color:#272727;letter-spacing:-0.248px;left:1565.04px;">Konto DT:</div>
<div class="t" style="top:472px;font-size:18px;color:#272727;letter-spacing:-0.422px;left:1790.8px;">Konto CT:</div>
<div class="t" style="top:472px;font-size:18px;color:#272727;letter-spacing:-0.406px;left:2017.28px;">Kwota:</div>
<div class="i" style="left:1565px;top:498px;width:218px;height:37px;"></div>
<div class="t" style="top:508px;font-size:18px;color:#272727;letter-spacing:-0.443px;left:1571.28px;">701</div>
<svg class="a" style="left:1759.30px;top:511.40px" width="15.00" height="9.80" viewBox="-2 -2 15.00 9.80"><path d="M0 0 L5.50 5.80 L11.00 0" fill="none" stroke="#262626" stroke-width="1.8" stroke-linecap="round" stroke-linejoin="round"/></svg>
<div class="i" style="left:1791px;top:498px;width:218px;height:37px;"></div>
<div class="t" style="top:508px;font-size:18px;color:#272727;letter-spacing:-0.039px;left:1797.52px;">200-001</div>
<svg class="a" style="left:1985.30px;top:511.40px" width="15.00" height="9.80" viewBox="-2 -2 15.00 9.80"><path d="M0 0 L5.50 5.80 L11.00 0" fill="none" stroke="#262626" stroke-width="1.8" stroke-linecap="round" stroke-linejoin="round"/></svg>
<div class="i" style="left:2017px;top:498px;width:131px;height:37px;"></div>
<div class="t" style="top:508px;font-size:18px;color:#272727;letter-spacing:-0.337px;left:1541.04px;width:600px;text-align:right;">10 000,00</div>
<div class="t" style="top:547px;font-size:18px;color:#272727;letter-spacing:-0.079px;left:1564.88px;">Nazwa konta Dt:</div>
<div class="i ro" style="left:1565px;top:573px;width:583px;height:37px;"></div>
<div class="t" style="top:583px;font-size:18px;color:#272727;letter-spacing:-0.371px;left:1570.56px;">Przychody ze sprzedaży</div>
<div class="t" style="top:622px;font-size:18px;color:#272727;letter-spacing:-0.221px;left:1564.56px;">Nazwa konta Ct:</div>
<div class="i ro" style="left:1565px;top:648px;width:583px;height:37px;"></div>
<div class="t" style="top:658px;font-size:18px;color:#272727;letter-spacing:-0.75px;left:1571.12px;">Odbiorcy / EMPIK SPÓŁKA AKCYJNA</div>
<div class="g" style="left:1546px;top:712px;width:621px;height:255px;"></div>
<div class="t" style="top:735px;font-size:18px;color:#272727;letter-spacing:-0.248px;left:1565.04px;">Konto DT:</div>
<div class="t" style="top:735px;font-size:18px;color:#272727;letter-spacing:-0.422px;left:1790.8px;">Konto CT:</div>
<div class="t" style="top:735px;font-size:18px;color:#272727;letter-spacing:-0.406px;left:2017.28px;">Kwota:</div>
<div class="i" style="left:1565px;top:761px;width:218px;height:37px;"></div>
<div class="t" style="top:771px;font-size:18px;color:#272727;letter-spacing:-0.443px;left:1571.28px;">223</div>
<svg class="a" style="left:1759.30px;top:774.40px" width="15.00" height="9.80" viewBox="-2 -2 15.00 9.80"><path d="M0 0 L5.50 5.80 L11.00 0" fill="none" stroke="#262626" stroke-width="1.8" stroke-linecap="round" stroke-linejoin="round"/></svg>
<div class="i" style="left:1791px;top:761px;width:218px;height:37px;"></div>
<div class="t" style="top:771px;font-size:18px;color:#272727;letter-spacing:-0.039px;left:1797.52px;">200-001</div>
<svg class="a" style="left:1985.30px;top:774.40px" width="15.00" height="9.80" viewBox="-2 -2 15.00 9.80"><path d="M0 0 L5.50 5.80 L11.00 0" fill="none" stroke="#262626" stroke-width="1.8" stroke-linecap="round" stroke-linejoin="round"/></svg>
<div class="i" style="left:2017px;top:761px;width:131px;height:37px;"></div>
<div class="t" style="top:771px;font-size:18px;color:#272727;letter-spacing:-0.35px;left:1541.03px;width:600px;text-align:right;">2 300,00</div>
<div class="t" style="top:810px;font-size:18px;color:#272727;letter-spacing:-0.079px;left:1564.88px;">Nazwa konta Dt:</div>
<div class="i ro" style="left:1565px;top:836px;width:583px;height:37px;"></div>
<div class="t" style="top:846px;font-size:18px;color:#272727;letter-spacing:-0.957px;left:1571.64px;">VAT należny</div>
<div class="t" style="top:885px;font-size:18px;color:#272727;letter-spacing:-0.221px;left:1564.56px;">Nazwa konta Ct:</div>
<div class="i ro" style="left:1565px;top:911px;width:583px;height:37px;"></div>
<div class="t" style="top:921px;font-size:18px;color:#272727;letter-spacing:-0.75px;left:1571.12px;">Odbiorcy / EMPIK SPÓŁKA AKCYJNA</div>
<div class="g" style="left:1546px;top:975px;width:621px;height:255px;"></div>
<div class="t" style="top:998px;font-size:18px;color:#272727;letter-spacing:-0.248px;left:1565.04px;">Konto DT:</div>
<div class="t" style="top:998px;font-size:18px;color:#272727;letter-spacing:-0.422px;left:1790.8px;">Konto CT:</div>
<div class="t" style="top:998px;font-size:18px;color:#272727;letter-spacing:-0.406px;left:2017.28px;">Kwota:</div>
<div class="i" style="left:1565px;top:1024px;width:218px;height:37px;"></div>
<svg class="a" style="left:1759.30px;top:1037.40px" width="15.00" height="9.80" viewBox="-2 -2 15.00 9.80"><path d="M0 0 L5.50 5.80 L11.00 0" fill="none" stroke="#262626" stroke-width="1.8" stroke-linecap="round" stroke-linejoin="round"/></svg>
<div class="i" style="left:1791px;top:1024px;width:218px;height:37px;"></div>
<svg class="a" style="left:1985.30px;top:1037.40px" width="15.00" height="9.80" viewBox="-2 -2 15.00 9.80"><path d="M0 0 L5.50 5.80 L11.00 0" fill="none" stroke="#262626" stroke-width="1.8" stroke-linecap="round" stroke-linejoin="round"/></svg>
<div class="i" style="left:2017px;top:1024px;width:131px;height:37px;"></div>
<div class="t" style="top:1034px;font-size:18px;color:#272727;letter-spacing:-0.599px;left:1540.62px;width:600px;text-align:right;">0,00</div>
<div class="t" style="top:1073px;font-size:18px;color:#272727;letter-spacing:-0.079px;left:1564.88px;">Nazwa konta Dt:</div>
<div class="i ro" style="left:1565px;top:1099px;width:583px;height:37px;"></div>
<div class="t" style="top:1148px;font-size:18px;color:#272727;letter-spacing:-0.221px;left:1564.56px;">Nazwa konta Ct:</div>
<div class="i ro" style="left:1565px;top:1174px;width:583px;height:37px;"></div>
<div class="g" style="left:1527px;top:1291px;width:659px;height:112px;">
<div class="gh"></div>
</div>
<div class="t" style="top:1301px;font-size:18px;color:#272727;letter-spacing:-0.421px;left:1545.64px;">Razem księgowania</div>
<div class="t" style="top:1357px;font-size:18px;color:#272727;letter-spacing:-1.703px;left:1545.96px;">DT:</div>
<div class="i ro" style="left:1577px;top:1347px;width:277px;height:37px;"></div>
<div class="t" style="top:1357px;font-size:18px;color:#272727;letter-spacing:-0.177px;left:1247.92px;width:600px;text-align:right;">12 300,00</div>
<div class="t" style="top:1357px;font-size:18px;color:#272727;letter-spacing:-1.902px;left:1861.56px;">CT:</div>
<div class="i ro" style="left:1891px;top:1347px;width:276px;height:37px;"></div>
<div class="t" style="top:1357px;font-size:18px;color:#272727;letter-spacing:-0.23px;left:1560.47px;width:600px;text-align:right;">12 300,00</div>
<div class="a" style="left:1px;top:1454px;width:2236px;height:37px;background:#f3f3f3;border-top:1px solid #a3a3a3;border-radius:0 0 11px 11px;"></div>
<div class="t" style="top:1463px;font-size:18px;color:#272727;letter-spacing:-0.108px;left:10.2px;">Obiekt bez zmian</div>
<div class="a" style="left:514px;top:1462px;width:1px;height:21px;background:#8a8a8a;"></div>
<div class="a" style="left:2217px;top:1473.5px;width:2.6px;height:2.6px;background:#7a7a7a;"></div>
<div class="a" style="left:2217px;top:1479.5px;width:2.6px;height:2.6px;background:#7a7a7a;"></div>
<div class="a" style="left:2223px;top:1473.5px;width:2.6px;height:2.6px;background:#7a7a7a;"></div>
<div class="a" style="left:2223px;top:1479.5px;width:2.6px;height:2.6px;background:#7a7a7a;"></div>
<svg class="a" style="left:175px;top:287px" width="26" height="36" viewBox="175 286 26 36"><path d="M179.6 290.6V314.6L184.6 309.6 188.5 317.6 191.5 316.2 187.7 307.6H195.6Z" fill="#fff" stroke="#000" stroke-width="1.25" stroke-linejoin="miter"/></svg>
</body></html>
